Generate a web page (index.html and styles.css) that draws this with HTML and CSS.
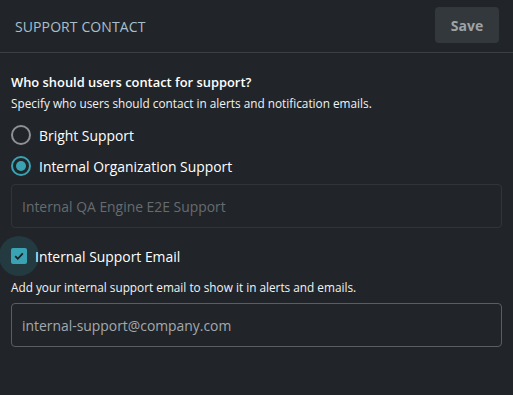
FILE: index.html
```html
<!DOCTYPE html>
<html lang="en">
<head>
  <meta charset="UTF-8">
  <title>Support Contact</title>
  <link rel="stylesheet" href="styles.css">
</head>
<body>

<header class="panel-head">
  <div class="panel-title">SUPPORT CONTACT</div>
  <button class="btn-save" disabled>Save</button>
</header>

<section class="panel-body">
  <h2 class="question">Who should users contact for support?</h2>
  <p class="hint">Specify who users should contact in alerts and notification emails.</p>

  <div class="radio-list">
    <label class="radio">
      <span class="radio-dot"></span>
      <span>Bright Support</span>
    </label>
    <label class="radio checked">
      <span class="radio-dot"></span>
      <span>Internal Organization Support</span>
    </label>
  </div>

  <div class="field field-disabled">Internal QA Engine E2E Support</div>

  <label class="check">
    <span class="check-halo">
      <span class="check-box">
        <svg width="12" height="12" viewBox="0 0 12 12"><path d="M2.2 6.2 L4.8 8.8 L9.8 3.4" fill="none" stroke="#1b1f23" stroke-width="1.8"/></svg>
      </span>
    </span>
    <span>Internal Support Email</span>
  </label>
  <p class="hint">Add your internal support email to show it in alerts and emails.</p>

  <div class="field">internal-support@company.com</div>
</section>

</body>
</html>
```

FILE: styles.css
```css
* {
  margin: 0;
  padding: 0;
  box-sizing: border-box;
}

body {
  font-family: 'Open Sans', sans-serif;
  background-color: #212529;
  color: #ffffff;
  width: 513px;
  height: 395px;
  overflow: hidden;
}

.panel-head {
  height: 53px;
  display: flex;
  justify-content: space-between;
  align-items: center;
  padding: 0 14px 0 15px;
  border-bottom: 1px solid #3a3f44;
}

.panel-title {
  color: #a9bfcc;
  font-size: 14px;
  letter-spacing: 0.1px;
}

.btn-save {
  width: 64px;
  height: 36px;
  margin-top: -2px;
  border: none;
  border-radius: 4px;
  background: #33383c;
  color: #9ea3a7;
  font-family: inherit;
  font-weight: bold;
  font-size: 14px;
}

.panel-body {
  padding: 19px 11px 0 11px;
}

.question {
  font-size: 12.9px;
  font-weight: 600;
  line-height: 20px;
}

.hint {
  font-size: 11.8px;
  line-height: 16px;
  margin-top: 3px;
  color: #f1f3f4;
}

.radio-list {
  margin-top: 14px;
  display: flex;
  flex-direction: column;
  gap: 11px;
}

.radio {
  display: flex;
  align-items: center;
  gap: 8px;
  font-size: 13.9px;
  height: 20px;
}

.radio-dot {
  width: 20px;
  height: 20px;
  border-radius: 50%;
  border: 2px solid #8e9296;
  position: relative;
}

.radio.checked .radio-dot {
  border-color: #3aa3b3;
}

.radio.checked .radio-dot::after {
  content: "";
  position: absolute;
  top: 3px;
  left: 3px;
  width: 10px;
  height: 10px;
  border-radius: 50%;
  background: #3aa3b3;
}

.field {
  height: 44px;
  border: 1px solid #595e63;
  border-radius: 4px;
  padding: 0 10px;
  display: flex;
  align-items: center;
  font-size: 13.9px;
  color: #a4a9ad;
}

.field-disabled {
  margin-top: 8px;
  border-color: #30353a;
  color: #666b70;
}

.check {
  margin-top: 8px;
  margin-left: -12px;
  display: flex;
  align-items: center;
  font-size: 13.9px;
}

.check-halo {
  width: 40px;
  height: 40px;
  border-radius: 50%;
  background: #233a41;
  display: flex;
  align-items: center;
  justify-content: center;
  margin-right: -4px;
  position: relative;
  z-index: 0;
}

.check-halo + span {
  position: relative;
  z-index: 1;
}

.check-box {
  width: 16px;
  height: 16px;
  border-radius: 2px;
  background: #3aa3b3;
  display: flex;
  align-items: center;
  justify-content: center;
}

.check + .hint {
  margin-top: 3px;
}

.check + .hint + .field {
  margin-top: 8px;
}
```
